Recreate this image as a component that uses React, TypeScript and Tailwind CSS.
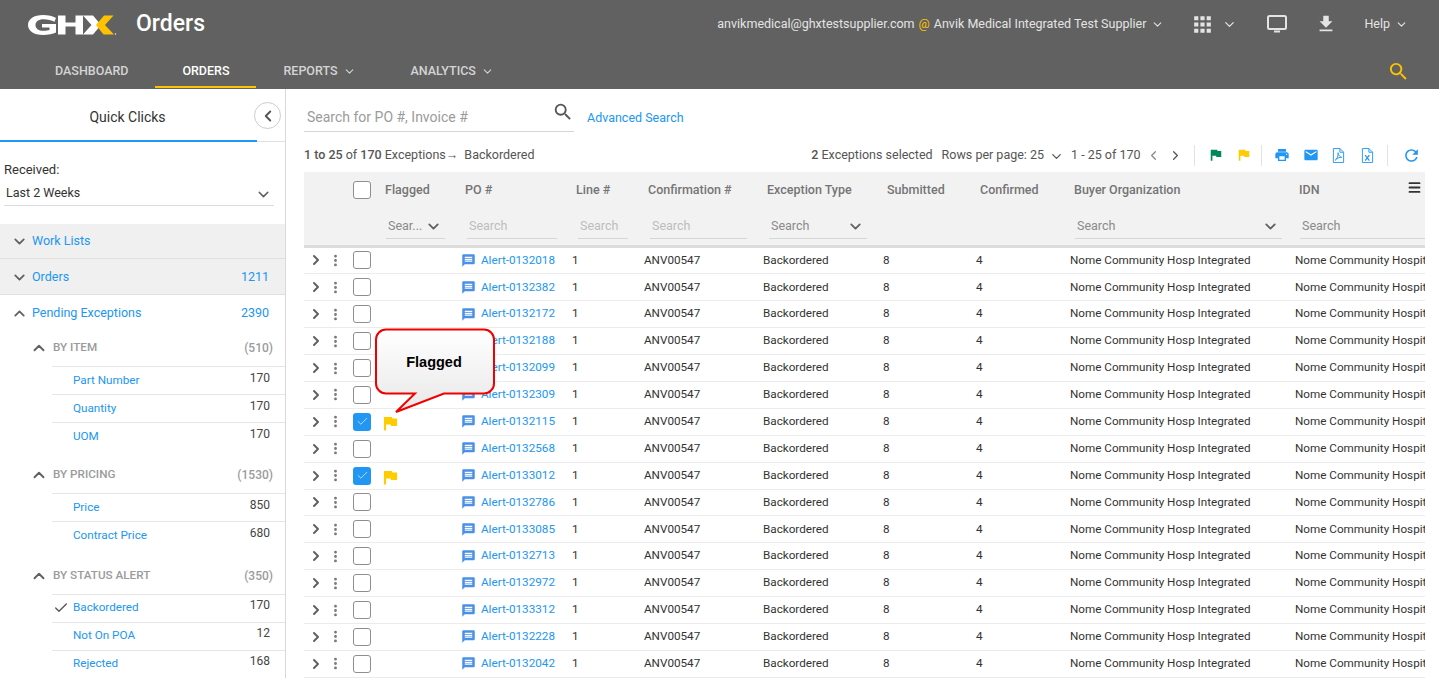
import { MdApps, MdEmail, MdFileDownload, MdMessage, MdPrint, MdRefresh, MdSearch } from "react-icons/md";
import { Check, ChevronDown, ChevronLeft, ChevronRight, ChevronUp, EllipsisVertical, Menu } from "lucide-react";

const FONT = "font-['Roboto','Liberation_Sans',sans-serif]";
const COLS = "grid grid-cols-[22px_19px_39px_77px_111px_72px_119px_120px_93px_94px_225px_130px]";
const BLUE = "text-[#2196f3]";

const rows = [
  ["0132018"], ["0132382"], ["0132172"], ["0132188"], ["0132099"], ["0132309"],
  ["0132115", "flag"], ["0132568"], ["0133012", "flag"], ["0132786"], ["0133085"],
  ["0132713"], ["0132972"], ["0133312"], ["0132228"], ["0132042"],
];

function Flag({ color, className }: { color: string; className?: string }) {
  return (
    <svg viewBox="0 0 16 16" className={className} fill={color}>
      <path d="M1 1h8.5l.6 1.6H15v8H8.6L8 9H3.2v6.5H1z" />
    </svg>
  );
}

function GhxLogo() {
  return (
    <svg viewBox="0 0 90 22" className="h-[22px] w-[90px]">
      <path fill="#fff" d="M15 1C6 1 0 5 0 11s6 10 15 10c5 0 10-1 13-2.5V10H14v3.5h7.500v2.500c-1.500.5-3.500.8-6 .8-5 0-8-2.300-8-5.800s3-5.800 8-5.800c4 0 8 1 11 2.500l1.500-3.700C25 2 20 1 15 1z" />
      <path fill="#fff" d="M30 1.500h7.500v7h10v-7H55v19h-7.500v-8h-10v8H30z" />
      <path fill="#fff" d="M55 1.500h10l8 9.500-8 9.500H55l8.500-9.500z" />
      <path fill="#fdc300" d="M76 1.500h9.500L77 11l9 9.500H75.500L68 11z" />
      <circle cx="87.500" cy="20" r=".7" fill="#fff" />
    </svg>
  );
}

function FileIcon({ label }: { label: string }) {
  return (
    <svg viewBox="0 0 14 16" className="h-[15px] w-[13px]" fill="none" stroke="#2196f3" strokeWidth="1">
      <path d="M1.500.5h7l4 4v11h-11z" />
      <path d="M8.500.5v4h4" />
      {label === "pdf" ? (
        <path d="M3.500 13c2-1 3.500-5 3-8 .5 3 2 4.500 4 5-2.500-.5-5 1-7 3z" />
      ) : (
        <path d="M4.500 7.500l4.500 6M9 7.500l-4.500 6" strokeWidth="1.300" />
      )}
    </svg>
  );
}

function Sep() {
  return <span className="block h-[21px] w-px bg-[#e3e3e3]" />;
}

function Header() {
  return (
    <header className="h-[89px] bg-[#616161] text-white">
      <div className="flex h-[49px] items-center pl-[28px] pr-[31.5px]">
        <GhxLogo />
        <h1 className="ml-[18px] text-[23px] font-medium">Orders</h1>
        <div className="ml-auto flex items-center pb-[1px] text-[12.5px] text-[#e4e4e4]">
          <span>anvikmedical@ghxtestsupplier.com</span>
          <span className="mx-[4px] text-[#fdc300]">@</span>
          <span>Anvik Medical Integrated Test Supplier</span>
          <ChevronDown size={13} className="ml-[4.5px]" />
          <MdApps size={25} className="ml-[26px]" />
          <ChevronDown size={15} className="ml-[7px]" />
          <svg viewBox="0 0 20 20" className="ml-[30.5px] h-[20px] w-[20px]" fill="none" stroke="#e4e4e4">
            <rect x="1" y="2" width="18" height="13" rx="1.500" strokeWidth="2" />
            <path d="M7 17.500h6" strokeWidth="2" />
          </svg>
          <MdFileDownload size={22} className="ml-[28px]" />
          <span className="ml-[27px]">Help</span>
          <ChevronDown size={13} className="ml-[4.5px]" />
        </div>
      </div>
      <nav className="flex h-[40px] items-start text-[12.5px] font-medium text-[#d4d4d4]">
        <a className="ml-[55px] mt-[13px]">DASHBOARD</a>
        <a className="ml-[27px] flex h-[39px] w-[101px] justify-center border-b-2 border-[#fdc300] pt-[13px] text-white">ORDERS</a>
        <a className="ml-[27px] mt-[13px] flex items-center">REPORTS<ChevronDown size={13} className="ml-[5px]" /></a>
        <a className="ml-[55px] mt-[13px] flex items-center">ANALYTICS<ChevronDown size={13} className="ml-[5px]" /></a>
        <MdSearch size={23} className="ml-auto mr-[29px] mt-[11px] text-[#fdc300]" />
      </nav>
    </header>
  );
}

function Section({ title, count, items, gap }: { title: string; count: string; items: [string, string, boolean?][]; gap: string }) {
  return (
    <section className={gap}>
      <div className="flex h-[38px] items-center pl-[30px] pr-[12px] pt-[2px]">
        <ChevronUp size={18} strokeWidth={2.5} className="text-[#616161]" />
        <span className="ml-[5px] text-[11.7px] font-medium text-[#9b9b9b]">{title}</span>
        <span className="ml-auto text-[12px] font-medium text-[#9b9b9b]">{count}</span>
      </div>
      <div className="ml-[52px]">
        {items.map(([name, n, checked]) => (
          <div key={name} className="relative flex h-[28px] items-center border-t border-[#e6e6e6] pl-[21px] pr-[15px] text-[11.7px]">
            {checked && <Check size={16} className="absolute left-[1px] text-[#555]" />}
            <span className={BLUE}>{name}</span>
            <span className="ml-auto -translate-y-[3px] text-[12px] text-[#444]">{n}</span>
          </div>
        ))}
      </div>
    </section>
  );
}

function Sidebar() {
  return (
    <aside className="relative h-[589px] w-[286px] shrink-0 overflow-hidden border-r border-[#d9d9d9]">
      <div className="h-[53px] border-b border-[#e0e0e0]">
        <div className="flex h-[53px] w-[257px] items-center justify-center border-b-[2px] border-[#2196f3] pr-[2px] pt-[6px] text-[14px] text-[#333]">
          Quick Clicks
        </div>
      </div>
      <button className="absolute left-[254px] top-[13px] flex h-[27px] w-[27px] items-center justify-center rounded-full border border-[#ccc] bg-white">
        <ChevronLeft size={18} strokeWidth={2.5} className="text-[#555]" />
      </button>
      <div className="w-[274px] pl-[4px] pt-[18px] text-[13px] text-[#333]">
        <div>Received:</div>
        <div className="flex h-[26px] items-center border-b border-[#ddd] px-[2px] pt-[2px] text-[12.5px]">
          Last 2 Weeks
          <ChevronDown size={17} className="ml-auto mt-[3px] text-[#616161]" />
        </div>
      </div>
      <div className="mt-[18.5px] flex h-[35px] items-center border-b border-[#e0e0e0] bg-[#f0f0f0] pl-[11px] text-[12.5px]">
        <ChevronDown size={17} strokeWidth={2.5} className="text-[#616161]" />
        <span className={`ml-[4px] ${BLUE}`}>Work Lists</span>
      </div>
      <div className="flex h-[36px] items-center border-b border-[#e0e0e0] bg-[#f0f0f0] pl-[11px] pr-[16px] pt-[1px] text-[12.5px]">
        <ChevronDown size={17} strokeWidth={2.5} className="text-[#616161]" />
        <span className={`ml-[4px] ${BLUE}`}>Orders</span>
        <span className={`ml-auto ${BLUE}`}>1211</span>
      </div>
      <div className="flex h-[33px] items-center pl-[11px] pr-[16px] pt-[4px] text-[12.5px]">
        <ChevronUp size={17} strokeWidth={2.5} className="text-[#616161]" />
        <span className={`ml-[4px] ${BLUE}`}>Pending Exceptions</span>
        <span className={`ml-auto ${BLUE}`}>2390</span>
      </div>
      <Section title="BY ITEM" count="(510)" gap="mb-[5px]" items={[["Part Number", "170"], ["Quantity", "170"], ["UOM", "170"]]} />
      <Section title="BY PRICING" count="(1530)" gap="mb-[6.5px]" items={[["Price", "850"], ["Contract Price", "680"]]} />
      <Section title="BY STATUS ALERT" count="(350)" gap="mb-[5px]" items={[["Backordered", "170", true], ["Not On POA", "12"], ["Rejected", "168"]]} />
    </aside>
  );
}

function Search({ w, label = "Search", dark, arrow }: { w: string; label?: string; dark?: boolean; arrow?: boolean }) {
  return (
    <div className={`flex h-[25px] items-center border-b border-[#d6d6d6] pl-[2px] text-[12.5px] ${w} ${dark ? "text-[#8a8a8a]" : "text-[#bdbdbd]"}`}>
      {label}
      {arrow && <ChevronDown size={17} strokeWidth={2.5} className="ml-auto mr-[3px] text-[#616161]" />}
    </div>
  );
}

function TableHead() {
  const labels = ["Flagged", "PO #", "Line #", "Confirmation #", "Exception Type", "Submitted", "Confirmed", "Buyer Organization", "IDN"];
  return (
    <div className="relative h-[75.5px] border-b-[3px] border-[#dcdcdc] bg-[#f2f2f2]">
      <div className={`${COLS} h-[35px] items-center pt-[1px] text-[12.5px] font-medium text-[#757575]`}>
        <span />
        <span />
        <span className="pl-[8px]">
          <span className="block h-[18px] w-[18px] rounded-[3px] border border-[#8e8e8e] bg-white" />
        </span>
        {labels.map((l, i) => (
          <span key={l} className={i === 0 ? "pl-[1px]" : "pl-[4px]"}>{l}</span>
        ))}
      </div>
      <div className={`${COLS} pt-[7px]`}>
        <span />
        <span />
        <span />
        <div className="pl-[2px]"><Search w="w-[59px]" label="Sear..." dark arrow /></div>
        <div className="pl-[6px]"><Search w="w-[90px]" /></div>
        <div className="pl-[6px]"><Search w="w-[50px]" /></div>
        <div className="pl-[6px]"><Search w="w-[97px]" /></div>
        <div className="pl-[6px]"><Search w="w-[98px]" dark arrow /></div>
        <span />
        <span />
        <div className="pl-[5px]"><Search w="w-[207px]" dark arrow /></div>
        <div className="pl-[5px]"><Search w="w-[125px]" dark /></div>
      </div>
      <Menu size={15} strokeWidth={3} className="absolute right-[3px] top-[8px] text-[#333]" />
    </div>
  );
}

function Row({ id, flag }: { id: string; flag?: string }) {
  const on = Boolean(flag);
  return (
    <div className={`${COLS} h-[26.9px] items-center border-b border-[#ebebeb] text-[11.7px] text-[#333]`}>
      <ChevronRight size={16} strokeWidth={3} className="ml-[4px] text-[#616161]" />
      <EllipsisVertical size={15} strokeWidth={2.5} className="ml-[2px] text-[#757575]" />
      <span className="pl-[8px]">
        {on ? (
          <span className="flex h-[18px] w-[18px] items-center justify-center rounded-[3px] bg-[#2196f3]">
            <Check size={13} strokeWidth={1.5} className="text-[#d5ebfd]" />
          </span>
        ) : (
          <span className="block h-[18px] w-[18px] rounded-[3px] border border-[#8e8e8e]" />
        )}
      </span>
      <span>{on && <Flag color="#ffcc00" className="-ml-px h-[15px] w-[15px] translate-y-[2px]" />}</span>
      <span className={`flex items-center ${BLUE}`}>
        <MdMessage size={15} className="mr-[5px] text-[#4a90e8]" />
        Alert-{id}
      </span>
      <span>1</span>
      <span>ANV00547</span>
      <span>Backordered</span>
      <span>8</span>
      <span>4</span>
      <span className="whitespace-nowrap">Nome Community Hosp Integrated</span>
      <span className="whitespace-nowrap">Nome Community Hospital</span>
    </div>
  );
}

function Toolbar() {
  return (
    <div className="flex h-[40px] items-center pr-[4.5px] pt-[6px] text-[12.5px] text-[#555]">
      <span>
        <b className="font-medium">1 to 25</b> of <b className="font-medium">170</b> Exceptions→ <span className="ml-[3px]">Backordered</span>
      </span>
      <div className="ml-auto flex items-center">
        <span><b className="font-medium">2</b> Exceptions selected</span>
        <span className="ml-[9px]">Rows per page: 25</span>
        <ChevronDown size={15} className="ml-[4.5px] mt-[3px]" />
        <span className="ml-[7.5px]">1 - 25 of 170</span>
        <ChevronLeft size={15} className="ml-[5.5px] text-[#888]" />
        <ChevronRight size={15} className="ml-[7px]" />
        <span className="ml-[10.5px]"><Sep /></span>
        <Flag color="#00875a" className="ml-[15.5px] h-[12px] w-[12px]" />
        <Flag color="#ffcc00" className="ml-[16px] h-[12px] w-[12px]" />
        <span className="ml-[11px]"><Sep /></span>
        <MdPrint size={16} className={`ml-[11.5px] ${BLUE}`} />
        <MdEmail size={16} className={`ml-[13px] ${BLUE}`} />
        <span className="ml-[13.5px]"><FileIcon label="pdf" /></span>
        <span className="ml-[16px]"><FileIcon label="xls" /></span>
        <span className="ml-[12.5px]"><Sep /></span>
        <MdRefresh size={19} className={`ml-[14px] ${BLUE}`} />
      </div>
    </div>
  );
}

function Callout() {
  return (
    <div className="absolute left-[70px] top-[239px] z-10 h-[86px] w-[124px]">
      <svg viewBox="0 0 124 86" className="absolute inset-0 h-full w-full">
        <defs>
          <linearGradient id="callout-bg" x1="0" y1="0" x2="0" y2="1">
            <stop offset="0" stopColor="#ffffff" />
            <stop offset="1" stopColor="#e8e8e8" />
          </linearGradient>
        </defs>
        <path
          d="M12 1.500h98a10 10 0 0 1 10 10v44a10 10 0 0 1-10 10H70L22 84l19-18.500H12a10 10 0 0 1-10-10v-44a10 10 0 0 1 10-10z"
          fill="url(#callout-bg)"
          stroke="#f00000"
          strokeWidth="2"
        />
      </svg>
      <span className="absolute left-0 top-[24px] w-[120px] text-center font-['Liberation_Sans',sans-serif] text-[14.5px] font-bold text-black">
        Flagged
      </span>
    </div>
  );
}

export default function App() {
  return (
    <div className={`h-[678px] w-[1439px] overflow-hidden bg-white ${FONT}`}>
      <Header />
      <div className="flex">
        <Sidebar />
        <main className="relative ml-[18px] w-[1121px] overflow-hidden">
          <div className="flex h-[43px] items-end">
            <div className="flex h-[29px] w-[270px] items-center border-b border-[#d6d6d6] pl-[3px] text-[14px] text-[#9b9b9b]">
              Search for PO #, Invoice #
              <MdSearch size={22} className="ml-auto -translate-y-[5px] text-[#555]" />
            </div>
            <a className={`ml-[13px] pb-[4px] text-[12.5px] ${BLUE}`}>Advanced Search</a>
          </div>
          <Toolbar />
          <TableHead />
          {rows.map(([id, flag]) => (
            <Row key={id} id={id} flag={flag} />
          ))}
          <Callout />
        </main>
      </div>
    </div>
  );
}
